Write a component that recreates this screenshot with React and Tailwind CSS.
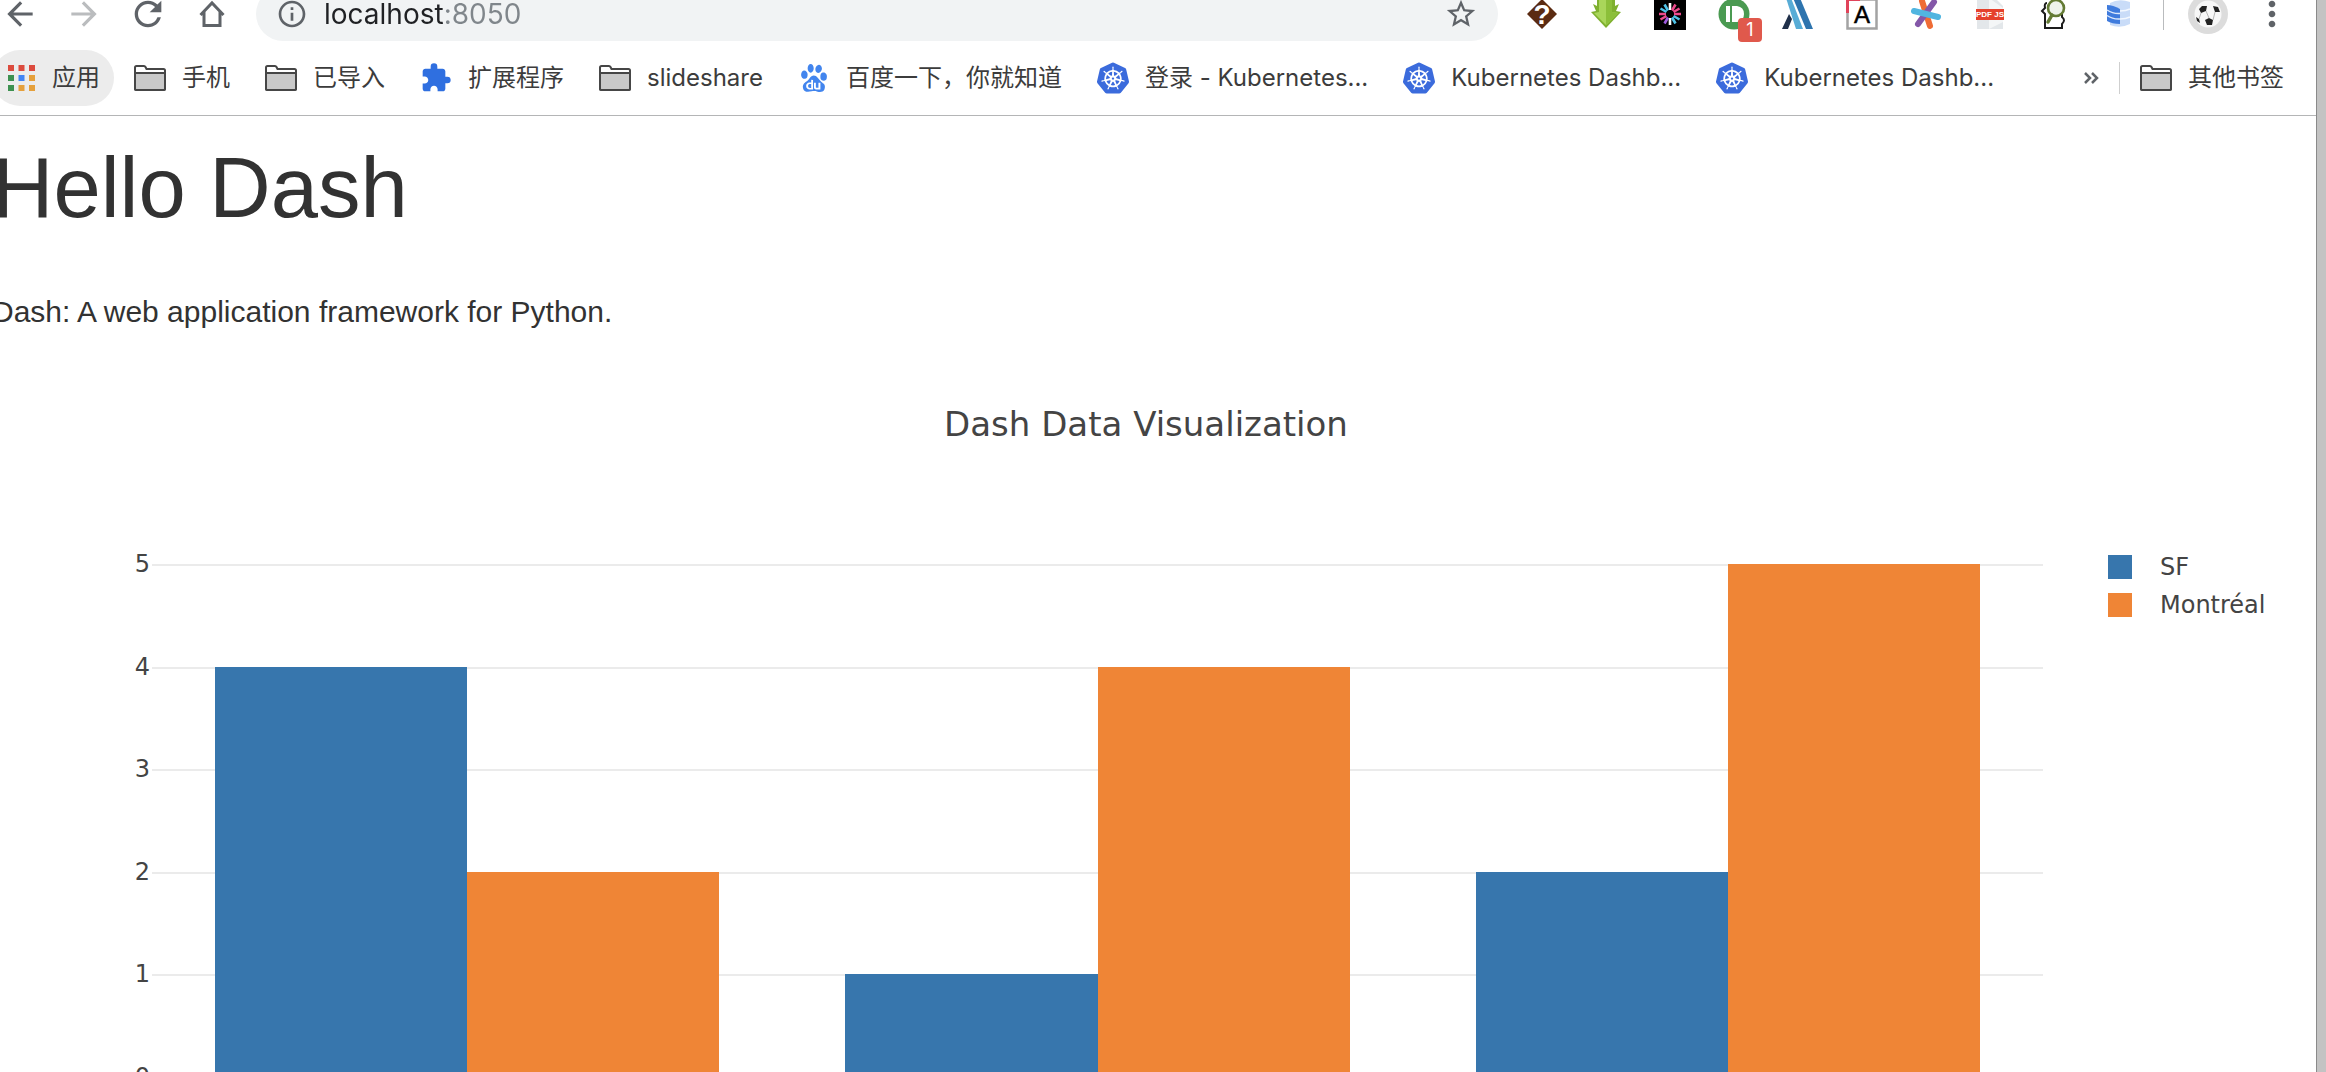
import React from 'react';
import { MdArrowBack, MdArrowForward, MdRefresh, MdInfoOutline, MdStarBorder, MdMoreVert, MdExtension } from 'react-icons/md';
import { SiBaidu, SiKubernetes } from 'react-icons/si';

const HomeIcon = () => (
    <svg width="32" height="32" viewBox="0 0 32 32" fill="none" stroke="#5f6368" strokeWidth="3">
        <path d="M4.500 17 L16 5 L27.500 17 M8 14 V27.500 H24 V14" />
    </svg>
);

const AppsIcon = () => (
    <svg width="28" height="28" viewBox="0 0 28 28">
        <path fill="#dc4b3e" d="M0 1h6v6H0zM10.500 1h6v6h-6zM21 1h6v6h-6z" />
        <path fill="#3d9150" d="M0 11h6v6H0zM0 21h6v6H0z" />
        <path fill="#4285f4" d="M10.500 11h6v6h-6z" />
        <path fill="#e5a03c" d="M21 11h6v6h-6zM10.500 21h6v6h-6zM21 21h6v6h-6z" />
    </svg>
);

const FolderIcon = () => (
    <svg className="shrink-0" width="32" height="28" viewBox="0 0 32 28" stroke="#464646" strokeWidth="2">
        <path fill="#fff" d="M1 24V3.500Q1 2 2.500 2H10Q11 2 11.500 3L12.500 5H29.500Q31 5 31 6.500V24.500Q31 26 29.500 26H2.500Q1 26 1 24.500Z" />
        <path fill="#c9c9c9" d="M1 9H31V24.500Q31 26 29.500 26H2.500Q1 26 1 24.500Z" />
    </svg>
);

const KubeIcon = () => <SiKubernetes size={32} color="#3b6bdc" className="shrink-0" />;

const extensions = [
    {
        name: 'Unknown file',
        icon: (
            <>
                <path fill="#5b2b12" d="M16 1 31 16 16 31 1 16z" />
                <text x="16" y="26" textAnchor="middle" fontSize="28" fontWeight="700" fill="#fff" fontFamily="Liberation Sans, sans-serif">?</text>
            </>
        ),
    },
    {
        name: 'Downloader',
        icon: (
            <>
                <path fill="#7fb02f" d="M7 0H25V8L29 6 26 13 31 14 16 30 1 14 6 13 3 6 7 8Z" />
                <path fill="#a9d65a" d="M9 0H22V14L28 15 16 27 4 15 9 14Z" />
                <path fill="#8cbf3a" d="M16 0H22V14L28 15 16 27Z" />
            </>
        ),
    },
    {
        name: 'Burst',
        icon: (
            <>
                <rect width="32" height="32" fill="#000" />
                <g strokeWidth="2.600">
                    <path stroke="#fff" d="M16 12V5M16 20V27" />
                    <path stroke="#ec4a8c" d="M18 12.500 21.500 6.500M19.500 14 25.500 10.500M20 16H27M12 16H5M12.500 18 6.500 21.500" />
                    <path stroke="#4fc3e8" d="M14 12.500 10.500 6.500M12.500 14 6.500 10.500M19.500 18 25.500 21.500M18 19.500 21.500 25.500" />
                    <path stroke="#a05be0" d="M14 19.500 10.500 25.500" />
                </g>
            </>
        ),
    },
    {
        name: 'Pushbullet',
        badge: '1',
        icon: (
            <>
                <circle cx="16" cy="16" r="15.500" fill="#4a9a51" />
                <path fill="#fff" d="M8 8h4v16H8zM14 8h5q7 1 7 8t-7 8h-5z" />
            </>
        ),
    },
    {
        name: 'Lambda',
        icon: (
            <>
                <path fill="#20304a" d="M7 16 10 21 6 31H0Z" />
                <path fill="#58acd6" d="M4 0H9L21 31H14Z" />
                <path fill="#2e74ae" d="M11 0H18L31 31H24Z" />
            </>
        ),
    },
    {
        name: 'Font reader',
        icon: (
            <>
                <path fill="#fff" stroke="#a3a3a3" strokeWidth="2.500" d="M1.500 1.500H30.500V30.500H1.500Z" />
                <path fill="none" stroke="#e0435a" strokeWidth="3" d="M1.500 15V1.500H14" />
                <text x="16" y="25" textAnchor="middle" fontSize="24" fill="#000" stroke="#000" strokeWidth="0.500" fontFamily="Liberation Sans, sans-serif">A</text>
            </>
        ),
    },
    {
        name: 'Asterisk',
        icon: (
            <g strokeWidth="6" strokeLinecap="round">
                <path stroke="#ef6c35" d="M12 3 20 28" />
                <path stroke="#8457a8" d="M24 4 8 26" />
                <path stroke="#51b5e0" d="M4 13 28 19" />
            </g>
        ),
    },
    {
        name: 'PDF viewer',
        icon: (
            <>
                <path fill="#e3e7ea" d="M3 0H21L29 8V31H3Z" />
                <path fill="#f4f6f7" d="M15 0 29 10V24L15 31Z" />
                <rect x="2" y="11" width="28" height="11" fill="#e5412d" />
                <text x="16" y="19" textAnchor="middle" fontSize="8" fontWeight="700" fill="#fff" fontFamily="Liberation Sans, sans-serif">PDF JS</text>
            </>
        ),
    },
    {
        name: 'Inspector',
        icon: (
            <>
                <path fill="none" stroke="#1c1c1c" strokeWidth="2" d="M9 5Q6 5 7 10L4 13 7 16V30H24V26Q28 22 24 19V16" />
                <circle cx="18" cy="10" r="8" fill="#eef3ec" stroke="#647b35" strokeWidth="2.600" />
                <path stroke="#647b35" strokeWidth="3.500" strokeLinecap="round" d="M14 17 10 24" />
            </>
        ),
    },
    {
        name: 'Database',
        icon: (
            <>
                <path fill="#c9dcf8" d="M8 5Q17 0 28 4V26Q18 31 8 27Z" />
                <path fill="none" stroke="#f3f8ff" strokeWidth="1.500" d="M18 13Q24 13 28 11M18 21Q24 21 28 19" />
                <path fill="#3f7bdd" d="M5 7Q11 7 18 11V26Q10 26 5 23Z" />
                <path fill="none" stroke="#dce9fc" strokeWidth="1.500" d="M5 12Q11 16 18 15.500M5 17.500Q11 21.500 18 21" />
            </>
        ),
    },
];

const bookmarks = [
    { label: '手机', icon: <FolderIcon /> },
    { label: '已导入', icon: <FolderIcon /> },
    { label: '扩展程序', icon: <MdExtension size={32} color="#2f6fe0" className="shrink-0" /> },
    { label: 'slideshare', icon: <FolderIcon /> },
    { label: '百度一下，你就知道', icon: <SiBaidu size={32} color="#4285ee" className="shrink-0 px-[2px]" /> },
    { label: '登录 - Kubernetes...', icon: <KubeIcon /> },
    { label: 'Kubernetes Dashb...', icon: <KubeIcon /> },
    { label: 'Kubernetes Dashb...', icon: <KubeIcon /> },
];

const series = [
    { name: 'SF', swatch: 'bg-[#3776ad]', values: [4, 1, 2] },
    { name: 'Montréal', swatch: 'bg-[#ef8536]', values: [2, 4, 5] },
];

const MAX = 5;

const ToolButton = ({ label, children }) => (
    <button aria-label={label} className="flex w-16 shrink-0 items-center justify-center text-[#5f6368]">
        {children}
    </button>
);

const Toolbar = () => (
    <div className="-mt-[13px] flex h-[54px] items-center pr-3">
        <div className="-ml-3 flex">
            <ToolButton label="Back"><MdArrowBack size={38} /></ToolButton>
            <ToolButton label="Forward"><MdArrowForward size={38} className="text-[#babcbe]" /></ToolButton>
            <ToolButton label="Reload"><MdRefresh size={40} /></ToolButton>
            <ToolButton label="Home"><HomeIcon /></ToolButton>
        </div>
        <div className="mx-3 flex h-full min-w-0 flex-1 items-center rounded-full bg-[#f1f3f4] px-5 text-[#5f6368]">
            <MdInfoOutline size={32} className="shrink-0" />
            {/* host dark, port grey */}
            <input
                aria-label="Address"
                defaultValue="localhost:8050"
                className="ml-4 min-w-0 flex-1 bg-linear-to-r from-[#202124] from-[120px] to-[#80868b] to-[120px] bg-clip-text font-['Inter','Noto_Sans_CJK_SC',sans-serif] text-[28px] text-transparent outline-none"
            />
            <button aria-label="Bookmark this page"><MdStarBorder size={34} /></button>
        </div>
        {extensions.map((ext) => (
            <ToolButton key={ext.name} label={ext.name}>
                <span className="relative">
                    <svg width="32" height="32" viewBox="0 0 32 32">{ext.icon}</svg>
                    {ext.badge && (
                        <span className="absolute top-5 left-5 flex size-6 items-center justify-center rounded bg-[#e0594c] font-['Inter',sans-serif] text-lg text-white">
                            {ext.badge}
                        </span>
                    )}
                </span>
            </ToolButton>
        ))}
        <div className="flex h-8 w-[26px] justify-center">
            <div className="w-px bg-[#b9bbbd]" />
        </div>
        <ToolButton label="Profile">
            <svg width="40" height="40" viewBox="0 0 40 40">
                <circle cx="20" cy="20" r="20" fill="#dcdcdc" />
                <circle cx="20" cy="20" r="13.500" fill="#f7f7f7" />
                <path fill="#222" d="M11 15 14 12 19 12 18 17 13 19ZM25 12 30 13 32 18 27 18ZM17 26 21 24 25 26 24 31 19 31ZM8 23 11 25 12 29 9 27Z" />
                <path stroke="#b5b5b5" fill="none" d="M18 17 21 24M27 18 25 26M13 19 11 25" />
            </svg>
        </ToolButton>
        <ToolButton label="Menu"><MdMoreVert size={40} /></ToolButton>
    </div>
);

const BookmarksBar = () => (
    <div className="flex h-[75px] items-center border-b border-[#b4b5b6] pr-8 font-['Inter','Noto_Sans_CJK_SC',sans-serif] text-2xl leading-8 whitespace-nowrap text-[#3c3c3c]">
        <a href="#apps" className="mr-5 -ml-2 flex h-14 items-center gap-4 rounded-full bg-[#ececec] pr-[14px] pl-4">
            <AppsIcon />
            应用
        </a>
        <nav className="flex gap-[35px]">
            {bookmarks.map((item, idx) => (
                <a key={idx} href="#bookmark" className="flex items-center gap-4">
                    {item.icon}
                    {item.label}
                </a>
            ))}
        </nav>
        <button aria-label="More bookmarks" className="ml-auto">
            <svg width="16" height="16" viewBox="0 0 16 16" fill="none" stroke="#5f6368" strokeWidth="2.500">
                <path d="M2 3 7 8 2 13M9 3 14 8 9 13" />
            </svg>
        </button>
        <div className="mx-5 h-8 w-px bg-[#cfcfcf]" />
        <a href="#other" className="flex items-center gap-4">
            <FolderIcon />
            其他书签
        </a>
    </div>
);

const BarChart = () => (
    <section className="pt-[72px] font-['DejaVu_Sans',sans-serif] text-2xl leading-8 text-[#444]">
        <h2 className="pr-6 text-center text-[34px] leading-10">Dash Data Visualization</h2>
        <div className="flex pt-[120px]">
            <div className="-my-4 flex w-[150px] flex-col justify-between text-right">
                {[5, 4, 3, 2, 1, 0].map((tick) => (
                    <span key={tick}>{tick}</span>
                ))}
            </div>
            <div className="ml-0.5 grid h-[513px] flex-1">
                <div className="col-start-1 row-start-1 flex flex-col">
                    {[5, 4, 3, 2, 1].map((line) => (
                        <div key={line} className="flex-1 border-t-2 border-[#ebebeb]" />
                    ))}
                </div>
                <div className="col-start-1 row-start-1 flex">
                    {['1', '2', '3'].map((cat, idx) => (
                        <div key={cat} className="flex flex-1 items-end px-[3.333%]">
                            {series.map((s) => (
                                <div
                                    key={s.name}
                                    className={`flex-1 ${s.swatch}`}
                                    style={{ height: `${(s.values[idx] / MAX) * 100}%` }}
                                />
                            ))}
                        </div>
                    ))}
                </div>
            </div>
            <ul className="-mt-4 w-[273px] pl-[65px]">
                {series.map((s) => (
                    <li key={s.name} className="flex h-[38px] items-center gap-7">
                        <span className={`size-6 ${s.swatch}`} />
                        {s.name}
                    </li>
                ))}
            </ul>
        </div>
    </section>
);

const App = () => (
    <div className="flex h-screen overflow-hidden bg-white">
        <div className="min-w-0 flex-1">
            <header>
                <Toolbar />
                <BookmarksBar />
            </header>
            <main>
                <div className="-ml-2 font-['Liberation_Sans',sans-serif] text-[#323232]">
                    <h1 className="pt-6 text-[85px] leading-[96px]">Hello Dash</h1>
                    <p className="pt-14 text-[30px] leading-10">Dash: A web application framework for Python.</p>
                </div>
                <BarChart />
            </main>
        </div>
        <div className="w-[10px] border-l border-[#8a8a8a] bg-[#c3c3c3]" />
    </div>
);

export default App;
